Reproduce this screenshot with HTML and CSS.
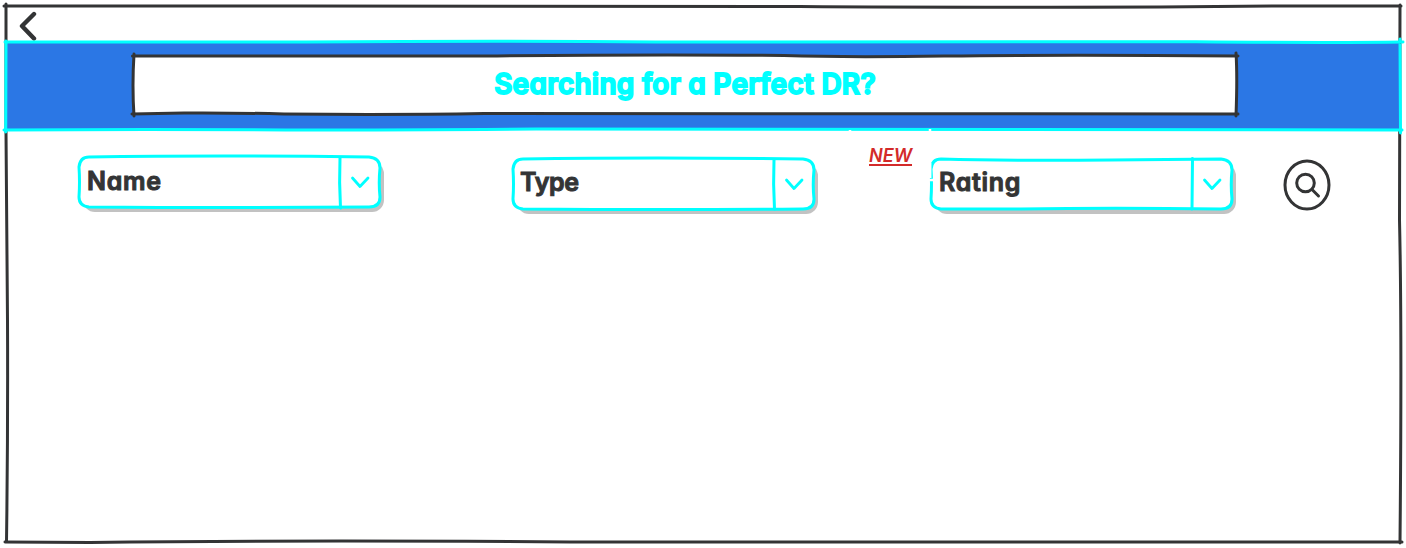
FILE: index.html
```
<!DOCTYPE html>
<html lang="en">
<head>
<meta charset="utf-8">
<title>Doctor search</title>
<link rel="stylesheet" href="styles.css">
</head>
<body>
<main class="screen">
  <svg class="sketch dark" viewBox="0 0 1406 548" aria-hidden="true">
    <path d="M4 6 L300 6 Q600 7 800 6.500 Q930 7.500 1160 7 L1280 6 L1401 6 M6 4 L6 132 Q6.500 240 7.500 320 Q8 430 6.500 542 M5 542 L90 542.500 Q300 540 570 542 Q850 540.500 1402 542 M1400 5 L1399.500 220 Q1402 330 1400 543"/>
  </svg>
  <header class="topbar">
    <svg class="back" viewBox="0 0 20 30" role="img" aria-label="Back"><path d="M15 3 L3 15 L15 27.500"/></svg>
  </header>
  <section class="banner">
    <svg class="sketch cyan" viewBox="0 0 1394 88" aria-hidden="true">
      <path d="M-1 0 L300 0 Q500 -1.500 650 0 Q900 -.5 1190 -.3 Q1320 1 1397 0 M0 -1 L-.3 90 M-2 88 Q140 87 280 88 Q420 88 530 87 Q750 88.500 1396 88 M1394 -3 L1394.500 91"/>
    </svg>
    <h1 class="title-box">
      <svg class="sketch dark" viewBox="0 0 1102 58" aria-hidden="true">
        <path d="M-1.500 0 L350 0 Q520 -1.800 650 -.5 Q710 1.500 810 0 Q930 -1.500 1104 0 M0 -2 Q-2 30 0 60 M-2 58 L50 57 Q100 56.700 150 58 Q260 59 350 57.500 Q650 59 1104 58 M1102 -3 Q1103.500 20 1102 60"/>
      </svg>
      <span class="title">Searching for a Perfect DR?</span>
    </h1>
  </section>
  <section class="filters">
    <div class="select name">
      <svg class="sketch cyan" viewBox="0 0 301 50" aria-hidden="true">
        <path class="face" d="M10 0 Q140 -2 290 0 Q301 1 301 11 Q299.500 26 301 40 Q301 50 290 50 Q150 51 10 50 Q0 49 0 40 Q1 25 0 10 Q1 0 10 0 Z"/>
        <path d="M261 1 Q260 25 261.500 51"/><path class="arrow" d="M273.500 21 L281 29.500 L289 21"/>
      </svg><span>Name</span>
    </div>
    <div class="select type">
      <svg class="sketch cyan" viewBox="0 0 301 50" aria-hidden="true">
        <path class="face" d="M10 0 Q140 -2 290 0 Q301 1 301 11 Q299.500 26 301 40 Q301 50 290 50 Q150 51 10 50 Q0 49 0 40 Q1 25 0 10 Q1 0 10 0 Z"/>
        <path d="M261 1 Q260 25 261.500 50"/><path class="arrow" d="M273.500 21 L281 29.500 L289 21"/>
      </svg><span>Type</span>
    </div>
    <div class="badge">NEW</div>
    <div class="select rating">
      <svg class="sketch cyan" viewBox="0 0 301 50" aria-hidden="true">
        <path class="face" d="M10 0 Q80 2 180 1 L290 0 Q301 1 301 11 Q299.500 26 301 40 Q301 50 290 50 Q180 48.500 90 50 L10 50 Q0 49 0 40 Q1 25 0 10 Q1 0 10 0 Z"/>
        <path d="M261.500 -.5 L261 50"/><path class="arrow" d="M273.500 21 L281 29.500 L289 21"/>
        <path class="gap" d="M-3 21 H3 M-81 -28 V-29 M-1 -28 V-30 M-.8 4 V19"/>
      </svg><span>Rating</span>
    </div>
    <svg class="search" viewBox="0 0 48 52" role="img" aria-label="Search">
      <ellipse cx="24" cy="26" rx="22" ry="24"/>
      <circle cx="22.500" cy="24" r="8.800"/><path d="M29 30.500 L35.500 37"/>
    </svg>
  </section>
</main>
</body>
</html>
```
FILE: styles.css
```
* { box-sizing: border-box; }
body {
  margin: 0;
  background: #fff;
  color: #333435;
  font-family: Inter, "Open Sans", sans-serif;
  font-feature-settings: "cv11";
}
.screen {
  position: relative;
  width: 1406px;
  height: 548px;
  padding: 0 6px;
  overflow: hidden;
}
.sketch {
  position: absolute;
  inset: 0;
  width: 100%;
  height: 100%;
  overflow: visible;
  fill: none;
  stroke-width: 3;
  stroke-linecap: round;
  stroke-linejoin: round;
}
.dark { stroke: #333435; }
.cyan { stroke: #00ffff; }
.topbar { height: 42px; padding: 11px 0 0 13px; }
.back {
  display: block;
  width: 20px;
  height: 30px;
  fill: none;
  stroke: #333435;
  stroke-width: 4.4;
  stroke-linecap: round;
  stroke-linejoin: round;
}
.banner {
  position: relative;
  height: 88px;
  padding: 14px 164px 0 128px;
  background: #2b77e5;
}
.title-box {
  position: relative;
  height: 58px;
  margin: 0;
  background: #fff;
  color: #00ffff;
  text-align: center;
  font-size: 28px;
  letter-spacing: .25px;
  line-height: 56px;
  font-weight: 600;
}
.title { position: relative; -webkit-text-stroke: 1.8px #00ffff; }
.filters {
  display: flex;
  align-items: flex-start;
  padding: 27px 0 0 73px;
}
.select {
  position: relative;
  width: 301px;
  height: 50px;
  padding-left: 8px;
  border-radius: 12px;
  box-shadow: 4px 5px 0 #c2c2c2;
  font-size: 25px;
  letter-spacing: .7px;
  line-height: 49px;
  font-weight: 600;
  -webkit-text-stroke: 1px #333435;
}
.select span { position: relative; }
.face { fill: #fff; }
.arrow { stroke-width: 2.8; }
.gap { stroke: #fff; stroke-width: 2.5; stroke-linecap: butt; }
.type {
  margin: 2px 0 0 133px;
  padding-left: 7px;
  letter-spacing: -.3px;
  line-height: 46px;
}
.badge {
  width: 43px;
  height: 21px;
  margin: -12px 0 0 55px;
  border-bottom: 2px solid #d32a2a;
  color: #d32a2a;
  font-size: 18px;
  line-height: 21px;
  font-style: italic;
  font-weight: 600;
  text-align: center;
}
.rating { margin: 2px 0 0 19px; line-height: 46px; }
.search {
  width: 48px;
  height: 52px;
  margin: 2px 0 0 51px;
  fill: none;
  stroke: #333435;
  stroke-width: 3;
  stroke-linecap: round;
}
```
